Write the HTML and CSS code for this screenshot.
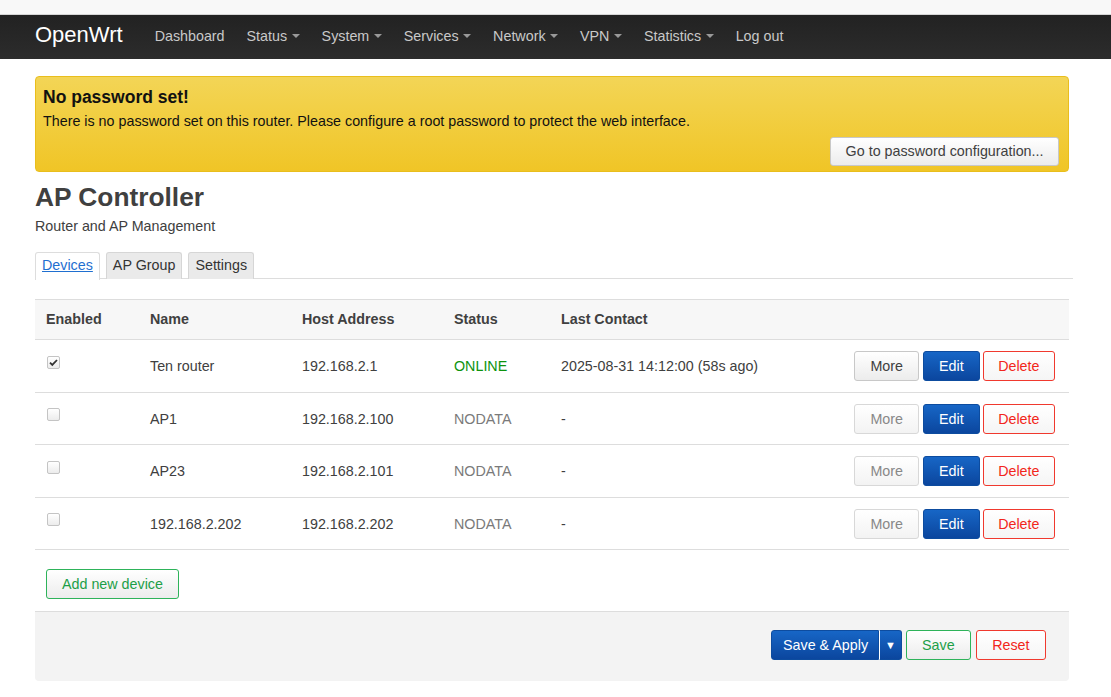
FILE: index.html
```html
<!DOCTYPE html>
<html>
<head>
<meta charset="utf-8">
<link rel="stylesheet" href="styles.css">
</head>
<body>
<div class="topstrip"></div>
<header class="navbar">
  <a class="brand">OpenWrt</a>
  <nav class="menu">
    <a class="item">Dashboard</a>
    <a class="item">Status<span class="caret"></span></a>
    <a class="item">System<span class="caret"></span></a>
    <a class="item">Services<span class="caret"></span></a>
    <a class="item">Network<span class="caret"></span></a>
    <a class="item">VPN<span class="caret"></span></a>
    <a class="item">Statistics<span class="caret"></span></a>
    <a class="item">Log out</a>
  </nav>
</header>
<main class="container">
  <div class="alert">
    <h4 class="alert-title">No password set!</h4>
    <p class="alert-text">There is no password set on this router. Please configure a root password to protect the web interface.</p>
    <div class="alert-actions"><button class="btn">Go to password configuration...</button></div>
  </div>
  <h2 class="page-title">AP Controller</h2>
  <div class="page-desc">Router and AP Management</div>
  <ul class="tabs">
    <li class="tab active"><a>Devices</a></li>
    <li class="tab"><a>AP Group</a></li>
    <li class="tab"><a>Settings</a></li>
  </ul>
  <table class="devices">
    <colgroup>
      <col class="c-en"><col class="c-name"><col class="c-host"><col class="c-status"><col class="c-last"><col class="c-act">
    </colgroup>
    <thead>
      <tr><th>Enabled</th><th>Name</th><th>Host Address</th><th>Status</th><th>Last Contact</th><th></th></tr>
    </thead>
    <tbody>
      <tr>
        <td><span class="cb checked"><svg viewBox="0 0 13 13" width="13" height="13"><path d="M3 6.6 L5.3 8.9 L10 4" fill="none" stroke="#333" stroke-width="1.8"/></svg></span></td>
        <td>Ten router</td><td>192.168.2.1</td><td class="online">ONLINE</td><td>2025-08-31 14:12:00 (58s ago)</td>
        <td class="actions"><button class="btn more">More</button><button class="btn edit">Edit</button><button class="btn del">Delete</button></td>
      </tr>
      <tr>
        <td><span class="cb"></span></td>
        <td>AP1</td><td>192.168.2.100</td><td class="nodata">NODATA</td><td>-</td>
        <td class="actions"><button class="btn more dim">More</button><button class="btn edit">Edit</button><button class="btn del">Delete</button></td>
      </tr>
      <tr>
        <td><span class="cb"></span></td>
        <td>AP23</td><td>192.168.2.101</td><td class="nodata">NODATA</td><td>-</td>
        <td class="actions"><button class="btn more dim">More</button><button class="btn edit">Edit</button><button class="btn del">Delete</button></td>
      </tr>
      <tr>
        <td><span class="cb"></span></td>
        <td>192.168.2.202</td><td>192.168.2.202</td><td class="nodata">NODATA</td><td>-</td>
        <td class="actions"><button class="btn more dim">More</button><button class="btn edit">Edit</button><button class="btn del">Delete</button></td>
      </tr>
    </tbody>
  </table>
  <div class="add-row"><button class="btn add">Add new device</button></div>
  <div class="page-actions">
    <div class="split">
      <button class="btn apply">Save &amp; Apply</button><button class="btn apply drop">&#9660;</button>
    </div>
    <button class="btn save">Save</button>
    <button class="btn del reset">Reset</button>
  </div>
</main>
</body>
</html>
```

FILE: styles.css
```css
* { box-sizing: border-box; }
body {
  margin: 0;
  font-family: "Liberation Sans", Arial, Helvetica, sans-serif;
  font-size: 14.3px;
  color: #404040;
  background: #fff;
}
.topstrip {
  height: 15px;
  background: #f8f8f8;
  border-bottom: 1px solid #d6d6d6;
}
.navbar {
  height: 44px;
  background: linear-gradient(to bottom, #222 0%, #2c2c2c 100%);
  display: flex;
  align-items: center;
  padding-left: 35px;
}
.brand {
  color: #fff;
  font-size: 22px;
  margin-right: 32px;
  position: relative;
  top: -2px;
}
.menu { display: flex; align-items: center; position: relative; top: -1px; }
.item {
  color: #c9c9c9;
  font-size: 14.3px;
  margin-right: 22px;
  display: inline-flex;
  align-items: center;
}
.caret {
  display: inline-block;
  width: 0; height: 0;
  margin-left: 4.5px;
  border-left: 4px solid transparent;
  border-right: 4px solid transparent;
  border-top: 4px solid #999;
}
.container {
  margin: 0 42px 0 35px;
  padding-top: 17px;
}
.alert {
  background: linear-gradient(to bottom, #f3d556 0%, #f0c526 100%);
  border: 1px solid #e9be1c;
  border-radius: 4px;
  padding: 8px 9px 5px 7px;
  color: #111;
}
.alert-title {
  margin: 0;
  font-size: 17.5px;
  line-height: 24px;
  font-weight: bold;
}
.alert-text {
  margin: 2px 0 0;
  line-height: 20px;
}
.alert-actions {
  display: flex;
  justify-content: flex-end;
  margin-top: 6px;
}
.btn {
  font-family: inherit;
  font-size: 14.3px;
  height: 30px;
  line-height: 28px;
  padding: 0 14px;
  border: 1px solid #c8c8c8;
  border-radius: 3px;
  background: linear-gradient(to bottom, #fff 0%, #ececec 100%);
  color: #404040;
  cursor: pointer;
}
.alert-actions .btn {
  height: 29px;
  line-height: 27px;
  padding: 0 14.5px;
}
.page-title {
  margin: 10px 0 0;
  font-size: 26.3px;
  line-height: 30px;
  font-weight: bold;
  color: #404040;
}
.page-desc {
  margin-top: 4px;
  line-height: 20px;
}
.tabs {
  list-style: none;
  margin: 16px -4px 0 0;
  padding: 0;
  display: flex;
  gap: 6px;
  border-bottom: 1px solid #ddd;
  height: 27px;
}
.tab {
  height: 27px;
  border: 1px solid #d6d6d6;
  border-bottom: none;
  border-radius: 3px 3px 0 0;
  background: #eaeaea;
  padding: 0 6px;
  line-height: 25px;
  color: #333;
}
.tab.active {
  background: #fff;
  height: 28px;
  border-color: #ddd;
}
.tab.active a { color: #1f6fd0; text-decoration: underline; }
.devices {
  width: 100%;
  margin-top: 20px;
  border-collapse: collapse;
  table-layout: fixed;
}
.c-en { width: 104px; }
.c-name { width: 152px; }
.c-host { width: 152px; }
.c-status { width: 107px; }
.c-act { width: 230px; }
.devices th {
  text-align: left;
  font-weight: bold;
  background: #f7f7f7;
  border-top: 1px solid #ddd;
  border-bottom: 1px solid #ddd;
  padding: 9px 11px 10px;
  line-height: 20px;
}
.devices td {
  padding: 11px 11px 10.5px;
  line-height: 30px;
  border-bottom: 1px solid #ddd;
  white-space: nowrap;
  vertical-align: middle;
}
.devices td.actions {
  text-align: right;
  padding-right: 14px;
  font-size: 0;
}
.actions .btn { vertical-align: middle; }
.actions .btn + .btn { margin-left: 3px; }
.actions .edit { margin-left: 4px !important; }
.cb {
  display: inline-block;
  width: 13px; height: 13px;
  border: 1px solid #c4c4c4;
  border-radius: 2px;
  background: linear-gradient(to bottom, #fff, #ececec);
  vertical-align: middle;
  position: relative;
  top: -5px;
  margin-left: 1px;
}
.cb svg { display: block; margin: -1px 0 0 -1px; }
.online { color: #0e930e; }
.nodata { color: #7a7a7a; }
.btn.more { padding: 0 15px; }
.btn.more.dim { color: #888; border-color: #d8d8d8; background: linear-gradient(to bottom, #fff, #f3f3f3); }
.btn.edit {
  color: #fff;
  background: linear-gradient(to bottom, #1766c6 0%, #0b469e 100%);
  border-color: #0d4c9f;
  padding: 0 15px;
}
.btn.del {
  color: #f2261c;
  border-color: #f0392e;
  background: linear-gradient(to bottom, #fff, #f5f5f5);
  padding: 0 14.5px;
}
.add-row { padding: 19px 0 12px 11px; }
.btn.add {
  color: #1d9f48;
  border-color: #2eb35a;
  padding: 0 15px;
}
.page-actions {
  background: #f3f3f3;
  border-top: 1px solid #ddd;
  border-radius: 0 0 4px 4px;
  display: flex;
  justify-content: flex-end;
  align-items: center;
  gap: 4px;
  padding: 18px 23px 21px;
}
.split { display: flex; }
.btn.apply {
  color: #fff;
  background: linear-gradient(to bottom, #1766c6 0%, #0b469e 100%);
  border-color: #0d4c9f;
  padding: 0 10px 0 11px;
  border-radius: 3px 0 0 3px;
}
.btn.apply.drop {
  border-radius: 0 3px 3px 0;
  border-left: 1px solid #fff;
  padding: 0 5px;
  font-size: 11px;
  width: 23px;
}
.btn.save {
  color: #1d9f48;
  border-color: #2eb35a;
  padding: 0 15px;
}
.btn.reset { padding: 0 15.5px; margin-left: 1px; }
```
